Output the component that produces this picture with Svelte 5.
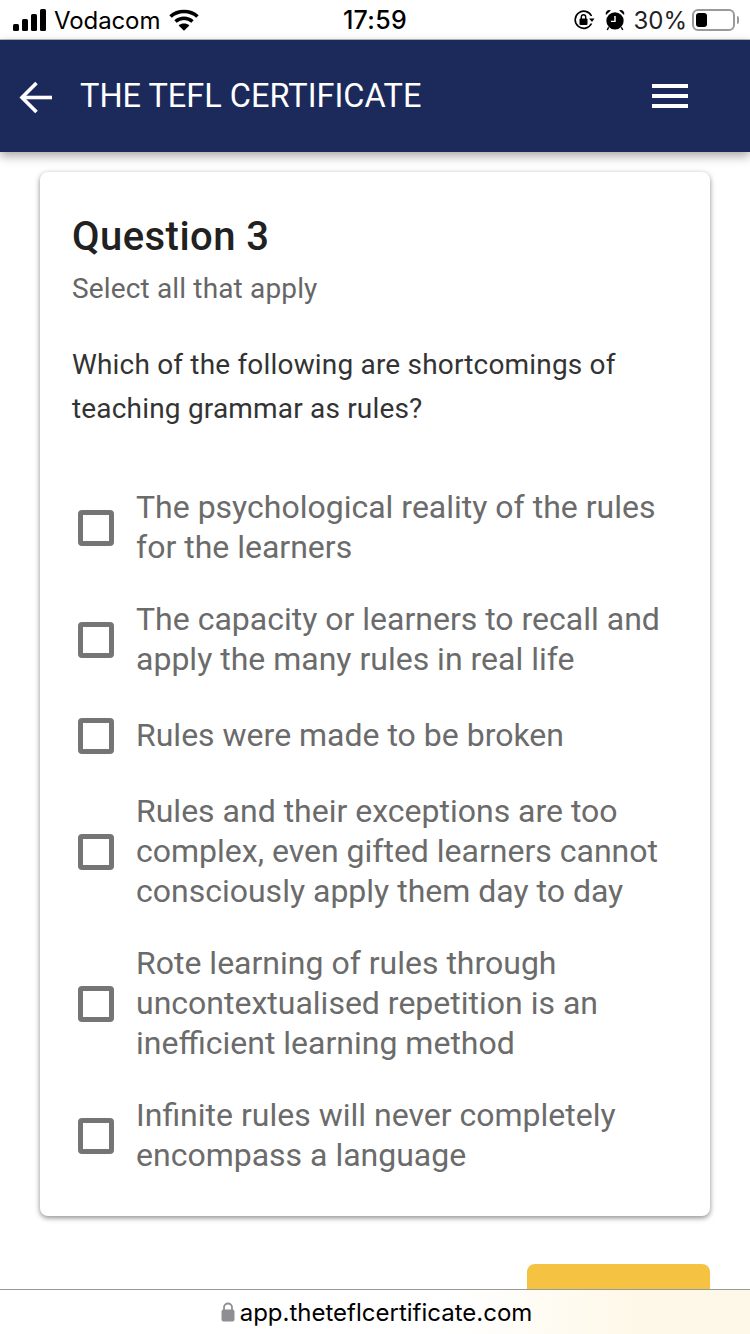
<script>
	const options = [
		'The psychological reality of the rules for the learners',
		'The capacity or learners to recall and apply the many rules in real life',
		'Rules were made to be broken',
		'Rules and their exceptions are too complex, even gifted learners cannot consciously apply them day to day',
		'Rote learning of rules through uncontextualised repetition is an inefficient learning method',
		'Infinite rules will never completely encompass a language'
	];
</script>

<div class="page">
	<div class="status">
		<div class="status-left">
			<svg class="signal" width="34" height="22" viewBox="0 0 34 22">
				<rect x="0" y="15" width="6" height="7" rx="1.5" />
				<rect x="9" y="10" width="6" height="12" rx="1.5" />
				<rect x="18" y="5" width="6" height="17" rx="1.5" />
				<rect x="27" y="0" width="6" height="22" rx="1.5" />
			</svg>
			<span class="carrier">Vodacom</span>
			<svg class="wifi" width="30" height="22" viewBox="0 0 30 22" fill="none" stroke="#000" stroke-width="3.6">
				<path d="M1.5 7.5C9 .8 21 .8 28.5 7.5" />
				<path d="M6.5 12.5C11.5 8.2 18.5 8.2 23.5 12.5" />
				<path d="M9.6 16.4C12.7 13.8 17.3 13.8 20.4 16.4L15 21.8Z" fill="#000" stroke="none" />
			</svg>
		</div>
		<div class="time">17:59</div>
		<div class="status-right">
			<svg width="22" height="22" viewBox="0 0 22 22" fill="none">
				<path d="M18.500 14.500A8.600 8.600 0 1 1 18.500 7" stroke="#000" stroke-width="1.600" />
				<path d="M16 9.500L21.500 9.500L19 13Z" fill="#000" />
				<rect x="6.500" y="9.500" width="8" height="6.500" rx="1" fill="#000" />
				<path d="M8.300 10V8a2.200 2.200 0 0 1 4.400 0v2" stroke="#000" stroke-width="1.400" />
			</svg>
			<svg class="alarm" width="20" height="22" viewBox="0 0 22 24">
				<circle cx="11" cy="13" r="9.500" fill="#000" />
				<path d="M11 7.500V13.500H6.500" fill="none" stroke="#fff" stroke-width="1.600" />
				<path d="M1 6.500A4 4 0 0 1 6.500 1.500ZM21 6.500A4 4 0 0 0 15.500 1.500Z" fill="#000" />
				<path d="M4 20L2.500 23M18 20L19.500 23" stroke="#000" stroke-width="1.600" />
			</svg>
			<span class="percent">30%</span>
			<div class="battery"><div class="battery-level"></div></div>
			<div class="battery-cap"></div>
		</div>
	</div>

	<header class="topbar">
		<svg class="back" width="34" height="34" viewBox="0 0 34 34" fill="none" stroke="#fff" stroke-width="3.600">
			<path d="M33 17.500H3" />
			<path d="M17.500 3L3 17.500L17.500 32" />
		</svg>
		<div class="title">THE TEFL CERTIFICATE</div>
		<div class="burger">
			<span></span>
			<span></span>
			<span></span>
		</div>
	</header>

	<main class="content">
		<section class="card">
			<h1>Question 3</h1>
			<p class="hint">Select all that apply</p>
			<p class="question">Which of the following are shortcomings of teaching grammar as rules?</p>
			<ul class="options">
				{#each options as option}
					<li class="option">
						<div class="box"></div>
						<div class="label">{option}</div>
					</li>
				{/each}
			</ul>
		</section>
		<div class="actions">
			<div class="next"></div>
		</div>
	</main>

	<footer class="urlbar">
		<svg width="14" height="20" viewBox="0 0 14 20" fill="none">
			<path d="M3 9V5.500a4 4 0 0 1 8 0V9" stroke="#8e8e93" stroke-width="1.800" />
			<rect x="0.500" y="7.500" width="13" height="12" rx="2" fill="#8e8e93" />
		</svg>
		<span>app.theteflcertificate.com</span>
	</footer>
</div>

<style>
	:global(body) {
		margin: 0;
		background: #fff;
	}

	.page {
		width: 750px;
		height: 1334px;
		display: flex;
		flex-direction: column;
		overflow: hidden;
		font-family: Roboto, sans-serif;
		background: #fff;
	}

	.status {
		height: 39px;
		flex: none;
		display: grid;
		grid-template-columns: 1fr auto 1fr;
		align-items: center;
		padding: 0 11px 0 13px;
		font-family: Inter, 'Liberation Sans', sans-serif;
		font-size: 24px;
		color: #000;
		border-bottom: 1px solid #b9bcc6;
	}

	.status-left {
		display: flex;
		align-items: center;
	}

	.signal {
		fill: #000;
		margin-right: 7px;
	}

	.carrier {
		letter-spacing: -0.1px;
		padding-top: 1px;
	}

	.wifi {
		margin-left: 9px;
	}

	.time {
		font-weight: 500;
		font-size: 25px;
		letter-spacing: 0.3px;
		padding-top: 1px;
		margin-right: 2px;
	}

	.status-right {
		display: flex;
		align-items: center;
		justify-content: flex-end;
	}

	.alarm {
		margin-left: 10px;
	}

	.percent {
		margin-left: 8px;
		margin-right: 5px;
		font-size: 24px;
		color: #222;
		padding-top: 1px;
	}

	.battery {
		width: 43px;
		height: 22px;
		box-sizing: border-box;
		border: 2px solid #9a9a9a;
		border-radius: 6px;
		padding: 2px;
		background: #fff;
	}

	.battery-level {
		width: 11px;
		height: 100%;
		background: #000;
		border-radius: 3px;
	}

	.battery-cap {
		width: 2px;
		height: 8px;
		margin-left: 2px;
		background: #9a9a9a;
		border-radius: 0 2px 2px 0;
	}

	.topbar {
		height: 112px;
		flex: none;
		display: flex;
		align-items: center;
		padding: 0 62px 0 19px;
		background: #1b2a5b;
		box-shadow: 0 4px 10px rgba(0, 0, 0, 0.35);
		position: relative;
		z-index: 1;
	}

	.back {
		margin-top: 1px;
	}

	.title {
		flex: 1;
		margin-left: 27px;
		font-size: 32.5px;
		color: #fff;
	}

	.burger {
		width: 36px;
		display: flex;
		flex-direction: column;
		gap: 6px;
	}

	.burger span {
		height: 4px;
		background: #fff;
	}

	.content {
		flex: 1;
		min-height: 0;
		padding: 20px 40px 0;
		overflow: hidden;
	}

	.card {
		height: 1044px;
		box-sizing: border-box;
		padding: 41px 32px 0;
		background: #fff;
		border-radius: 8px;
		box-shadow: 0 2px 5px rgba(0, 0, 0, 0.4), 0 1px 8px rgba(0, 0, 0, 0.08);
	}

	h1 {
		margin: 0;
		font-size: 40px;
		font-weight: 500;
		line-height: 48px;
		letter-spacing: 0.45px;
		color: #212121;
	}

	.hint {
		margin: 8px 0 0;
		font-size: 28px;
		line-height: 40px;
		letter-spacing: 0.15px;
		color: #666;
	}

	.question {
		margin: 34px 0 0;
		font-size: 28px;
		line-height: 44px;
		letter-spacing: 0.18px;
		color: #333;
	}

	.options {
		list-style: none;
		margin: 56px 0 0;
		padding: 0;
		display: flex;
		flex-direction: column;
		gap: 32px;
	}

	.option {
		display: flex;
		align-items: center;
		min-height: 48px;
		padding-left: 6px;
	}

	.box {
		width: 36px;
		height: 36px;
		flex: none;
		box-sizing: border-box;
		margin-top: 2px;
		border: 5px solid #757575;
		border-radius: 4px;
	}

	.label {
		margin-left: 22px;
		font-size: 32px;
		line-height: 40px;
		color: #6b6b6b;
	}

	.actions {
		display: flex;
		justify-content: flex-end;
		margin-top: 48px;
	}

	.next {
		width: 183px;
		height: 60px;
		background: #f5c242;
		border-radius: 8px;
	}

	.urlbar {
		height: 44px;
		flex: none;
		display: flex;
		align-items: center;
		justify-content: center;
		gap: 5px;
		padding-left: 3px;
		border-top: 1px solid #999;
		background: linear-gradient(90deg, #fff 60%, #fef8e8 85%);
		font-family: Inter, 'Liberation Sans', sans-serif;
		font-size: 24px;
		color: #000;
		position: relative;
		z-index: 1;
	}
</style>
